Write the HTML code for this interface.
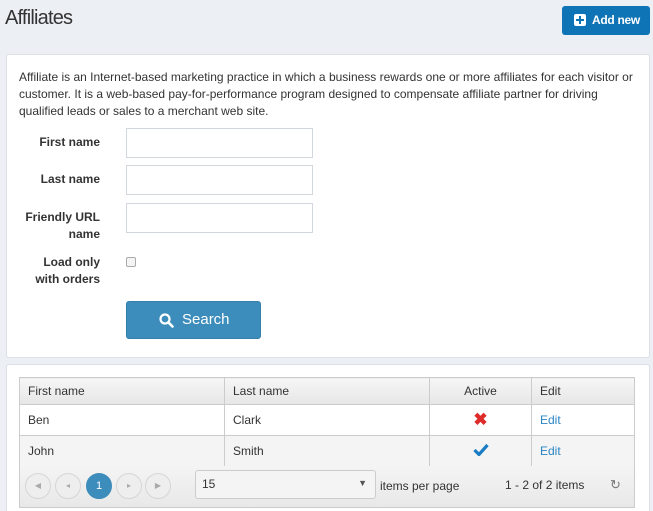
<!DOCTYPE html>
<html style="width:653px;height:511px;overflow:hidden"><head><style>
*{box-sizing:border-box;margin:0;padding:0}
body{width:653px;height:511px;background:#ecf0f5;font-family:"Liberation Sans",sans-serif;color:#333;position:relative;overflow:hidden;font-size:12px}
.a{position:absolute}
h1{position:absolute;left:5px;top:7px;font-weight:normal;font-size:20px;color:#333;letter-spacing:-0.8px}
.add{left:562px;top:6px;width:88px;height:29px;background:#0f74b5;border-radius:3px;color:#fff;font-size:12px;font-weight:bold;line-height:29px;padding-left:30px;letter-spacing:-0.3px}
.add i{position:absolute;left:12px;top:8px;width:12px;height:12px;background:#fff;border-radius:2px}
.add i:before{content:"";position:absolute;left:5px;top:2px;width:2px;height:8px;background:#0f74b5}
.add i:after{content:"";position:absolute;left:2px;top:5px;width:8px;height:2px;background:#0f74b5}
.panel{background:#fff;border:1px solid #dde1e6;border-radius:3px}
.desc{left:19px;top:69px;width:620px;font-size:12px;line-height:17px;color:#333}
.lbl{width:100px;text-align:right;font-weight:bold;font-size:12px;line-height:17px;color:#333;left:0}
.inp{left:126px;width:187px;height:30px;border:1px solid #d2d6de;background:#fff}
.cb{left:126px;top:257px;width:10px;height:10px;border:1px solid #aaa;border-radius:2px;background:#f4f4f4}
.search{left:126px;top:301px;width:135px;height:38px;background:#3c8dbc;border:1px solid #367fa9;border-radius:3px;color:#fff;font-size:15px;line-height:36px;padding-left:55px}
table{position:absolute;left:19px;top:377px;width:616px;border-collapse:collapse;font-size:12px}
td,th{border:1px solid #ccc;padding:0 8px;text-align:left;font-weight:normal;color:#333}
th{height:27px;background:linear-gradient(#f6f6f6,#e6e6e6)}
tr.r td{height:31px}
.alt td{background:#f4f4f4}
.c{text-align:center!important}
.ed{color:#2a85c4}
.pager{left:19px;top:466px;width:616px;height:42px;background:linear-gradient(#f4f4f4,#e8e8e8);border:1px solid #ccc;border-top:none}
.pb{top:7px;width:26px;height:26px;border:1px solid #d6d6d6;border-radius:50%;background:#eee;color:#aaa;font-size:8px;text-align:center;line-height:24px}
.sel{left:175px;top:4px;width:181px;height:29px;border:1px solid #ccc;border-radius:3px;background:#f4f4f4;padding:6px;font-size:12px}
</style></head><body>
<h1>Affiliates</h1>
<div class="a add"><i></i>Add new</div>
<div class="a panel" style="left:6px;top:54px;width:644px;height:304px"></div>
<div class="a desc">Affiliate is an Internet-based marketing practice in which a business rewards one or more affiliates for each visitor or customer. It is a web-based pay-for-performance program designed to compensate affiliate partner for driving qualified leads or sales to a merchant web site.</div>
<div class="a lbl" style="top:134px">First name</div>
<div class="a lbl" style="top:171px">Last name</div>
<div class="a lbl" style="top:209px">Friendly URL<br>name</div>
<div class="a lbl" style="top:254px">Load only<br>with orders</div>
<div class="a inp" style="top:128px"></div>
<div class="a inp" style="top:165px"></div>
<div class="a inp" style="top:203px"></div>
<div class="a cb"></div>
<div class="a search"><svg class="a" style="left:32px;top:11px" width="15" height="15" viewBox="0 0 15 15"><circle cx="6" cy="6" r="4.5" fill="none" stroke="#fff" stroke-width="2.2"/><path d="M9.3 9.3L13.5 13.5" stroke="#fff" stroke-width="2.6" stroke-linecap="round"/></svg>Search</div>
<div class="a panel" style="left:6px;top:364px;width:644px;height:160px"></div>
<table>
<tr><th style="width:205px">First name</th><th style="width:205px">Last name</th><th class="c" style="width:102px">Active</th><th>Edit</th></tr>
<tr class="r"><td>Ben</td><td>Clark</td><td class="c"><span style="color:#dd2a2a;font-size:17px;font-weight:bold">✖</span></td><td class="ed">Edit</td></tr>
<tr class="r alt"><td>John</td><td>Smith</td><td class="c"><svg width="16" height="13" viewBox="0 0 16 13"><path d="M1.5 7l4.5 4.5L14.5 2" fill="none" stroke="#1a7dc4" stroke-width="3.2"/></svg></td><td class="ed">Edit</td></tr>
</table>
<div class="a pager">
<div class="a pb" style="left:5px">◀</div>
<div class="a pb" style="left:35px">◂</div>
<div class="a pb" style="left:66px;background:#3c8dbc;border-color:#3c8dbc;color:#fff;font-size:11px">1</div>
<div class="a pb" style="left:96px">▸</div>
<div class="a pb" style="left:125px">▶</div>
<div class="a sel">15<span style="position:absolute;right:8px;top:7px;font-size:9px;color:#555">▼</span></div>
<div class="a" style="left:360px;top:13px;font-size:12px">items per page</div>
<div class="a" style="left:485px;top:12px;font-size:12px">1 - 2 of 2 items</div>
<div class="a" style="left:590px;top:11px;font-size:13px;color:#777">↻</div>
</div>
</body></html>
